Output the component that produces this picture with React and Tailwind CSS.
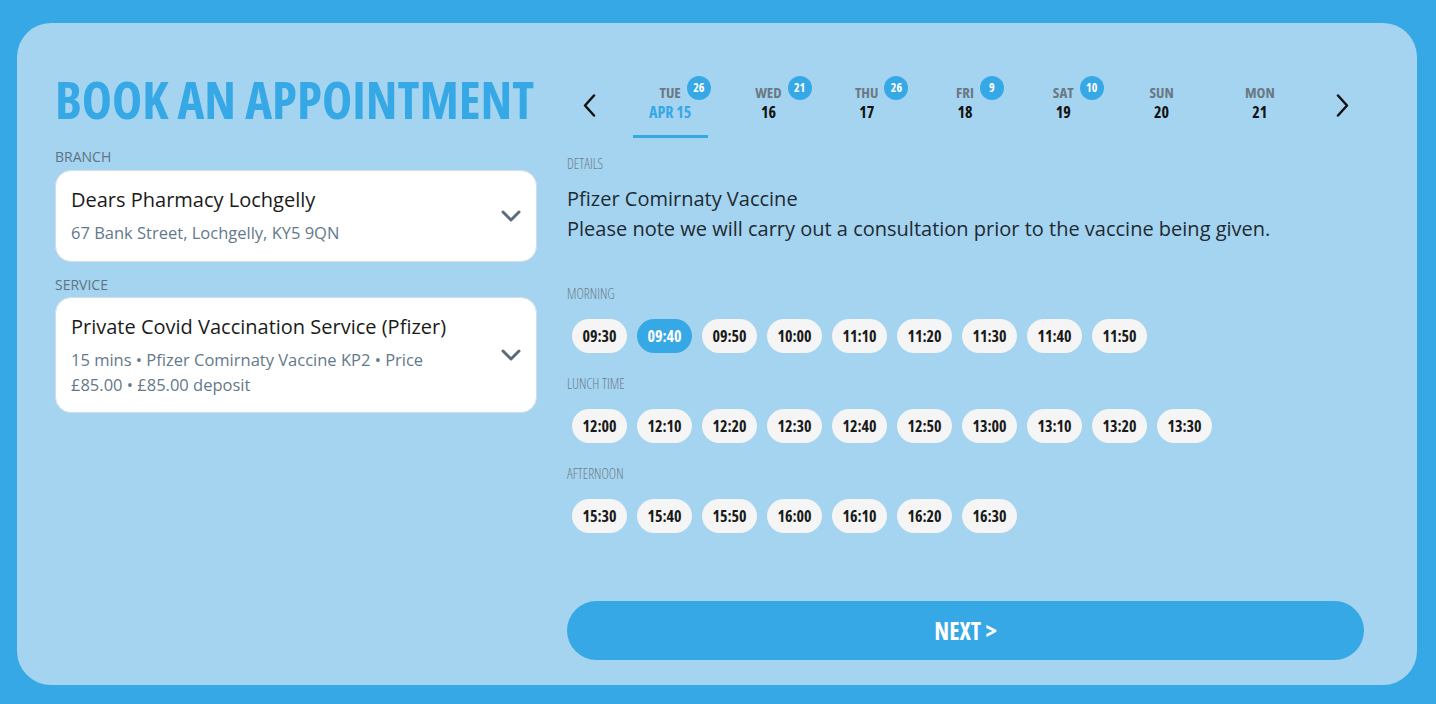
import React, { useState } from "react";

const days = [
    { name: "TUE", date: "APR 15", badge: "26" },
    { name: "WED", date: "16", badge: "21" },
    { name: "THU", date: "17", badge: "26" },
    { name: "FRI", date: "18", badge: "9" },
    { name: "SAT", date: "19", badge: "10" },
    { name: "SUN", date: "20" },
    { name: "MON", date: "21" },
];

const sections = [
    { label: "MORNING", times: ["09:30", "09:40", "09:50", "10:00", "11:10", "11:20", "11:30", "11:40", "11:50"] },
    { label: "LUNCH TIME", times: ["12:00", "12:10", "12:20", "12:30", "12:40", "12:50", "13:00", "13:10", "13:20", "13:30"] },
    { label: "AFTERNOON", times: ["15:30", "15:40", "15:50", "16:00", "16:10", "16:20", "16:30"] },
];

function Chevron() {
    return (
        <svg width="20" height="12" viewBox="0 0 20 12" fill="none">
            <path d="M2 2 L10 10 L18 2" stroke="#5b6b7b" strokeWidth="3" strokeLinecap="round" strokeLinejoin="round" />
        </svg>
    );
}

export default function App() {
    const [activeDay, setActiveDay] = useState(0);
    const [slot, setSlot] = useState("09:40");

    return (
        <div className="min-h-screen bg-[#37a8e6] pt-[23px] pl-[17px] pb-[19px] font-['Open_Sans',sans-serif]">
            <div className="w-[1400px] h-[662px] bg-[#a4d4f0] rounded-[34px] pt-[50px] pb-[25px] pl-[38px] flex gap-[30px]">
                {/* left column */}
                <div className="w-[482px]">
                    <h1 className="font-['Open_Sans',sans-serif] [font-stretch:75%] font-bold text-[51px] leading-[52px] text-[#37a8e6] whitespace-nowrap">
                        BOOK AN APPOINTMENT
                    </h1>

                    <div className="mt-[22px] text-[14px] leading-[20px] text-[#5f7383]">BRANCH</div>
                    <div className="mt-[3px] bg-white rounded-[16px] border border-[#d3dee7] px-[15px] pt-[15px] pb-[16px] flex items-center justify-between">
                        <div className="w-[390px]">
                            <div className="text-[20px] leading-[28px] text-[#1b1b1b]">Dears Pharmacy Lochgelly</div>
                            <div className="mt-[7px] text-[16.5px] leading-[24px] text-[#64798a]">67 Bank Street, Lochgelly, KY5 9QN</div>
                        </div>
                        <Chevron />
                    </div>

                    <div className="mt-[13px] text-[14px] leading-[20px] text-[#5f7383]">SERVICE</div>
                    <div className="mt-[2px] bg-white rounded-[16px] border border-[#d3dee7] px-[15px] pt-[15px] pb-[15px] flex items-center justify-between">
                        <div className="w-[390px]">
                            <div className="text-[20px] leading-[28px] text-[#1b1b1b] whitespace-nowrap">Private Covid Vaccination Service (Pfizer)</div>
                            <div className="mt-[6px] text-[16.5px] leading-[25px] text-[#64798a]">
                                15 mins • Pfizer Comirnaty Vaccine KP2 • Price £85.00 • £85.00 deposit
                            </div>
                        </div>
                        <Chevron />
                    </div>
                </div>

                {/* right column */}
                <div className="w-[797px] flex flex-col pt-[9px]">
                    <div className="flex">
                        <div className="w-[54px] pl-[16px] pt-[12px]">
                            <svg width="13" height="23" viewBox="0 0 13 23" fill="none">
                                <path d="M11 1.5 L2 11.5 L11 21.5" stroke="#111" strokeWidth="2.5" strokeLinecap="round" strokeLinejoin="round" />
                            </svg>
                        </div>
                        <div className="flex-1 grid grid-cols-7">
                            {days.map((d, i) => (
                                <div key={d.name} className="flex justify-center">
                                    <button
                                        onClick={() => setActiveDay(i)}
                                        className={`w-[75px] flex flex-col items-center pb-[13px] border-b-[3px] ${i === activeDay ? "border-[#37a8e6]" : "border-transparent"}`}
                                    >
                                        <span className="relative font-['Open_Sans',sans-serif] [font-stretch:75%] font-bold text-[15px] leading-[20px] text-[#6b7884]">
                                            {d.name}
                                            {d.badge && (
                                                <span className="absolute left-full ml-[6px] top-[-6px] w-[24px] h-[24px] rounded-full bg-[#37a8e6] text-white text-[12px] leading-[24px] font-bold text-center">
                                                    {d.badge}
                                                </span>
                                            )}
                                        </span>
                                        <span className={`font-['Open_Sans',sans-serif] [font-stretch:75%] font-bold text-[16px] leading-[20px] ${i === activeDay ? "text-[#37a8e6]" : "text-[#111]"}`}>
                                            {d.date}
                                        </span>
                                    </button>
                                </div>
                            ))}
                        </div>
                        <div className="w-[55px] flex justify-end pr-[15px] pt-[12px]">
                            <svg width="13" height="23" viewBox="0 0 13 23" fill="none">
                                <path d="M2 1.5 L11 11.5 L2 21.5" stroke="#111" strokeWidth="2.5" strokeLinecap="round" strokeLinejoin="round" />
                            </svg>
                        </div>
                    </div>

                    <div className="mt-[16px] font-['Open_Sans',sans-serif] [font-stretch:75%] font-light text-[14px] leading-[20px] text-[#6f7f8c]">DETAILS</div>
                    <div className="mt-[10px] text-[20px] leading-[30px] text-[#1f2a33]">
                        <div>Pfizer Comirnaty Vaccine</div>
                        <div>Please note we will carry out a consultation prior to the vaccine being given.</div>
                    </div>

                    <div className="mt-[40px] flex flex-col gap-[16px]">
                        {sections.map((s) => (
                            <div key={s.label}>
                                <div className="font-['Open_Sans',sans-serif] [font-stretch:75%] font-light text-[14px] leading-[20px] text-[#6f7f8c]">{s.label}</div>
                                <div className="mt-[10px] flex flex-wrap">
                                    {s.times.map((t) => (
                                        <button
                                            key={t}
                                            onClick={() => setSlot(t)}
                                            className={`m-[5px] w-[55px] h-[34px] rounded-full flex items-center justify-center font-['Open_Sans',sans-serif] [font-stretch:75%] font-bold text-[16px] ${slot === t ? "bg-[#37a8e6] text-white" : "bg-[#f5f5f5] text-[#1a1a1a]"}`}
                                        >
                                            {t}
                                        </button>
                                    ))}
                                </div>
                            </div>
                        ))}
                    </div>

                    <button className="mt-auto h-[59px] w-full rounded-full bg-[#37a8e6] text-white font-['Open_Sans',sans-serif] [font-stretch:75%] font-bold text-[24px]">
                        NEXT &gt;
                    </button>
                </div>
            </div>
        </div>
    );
}
